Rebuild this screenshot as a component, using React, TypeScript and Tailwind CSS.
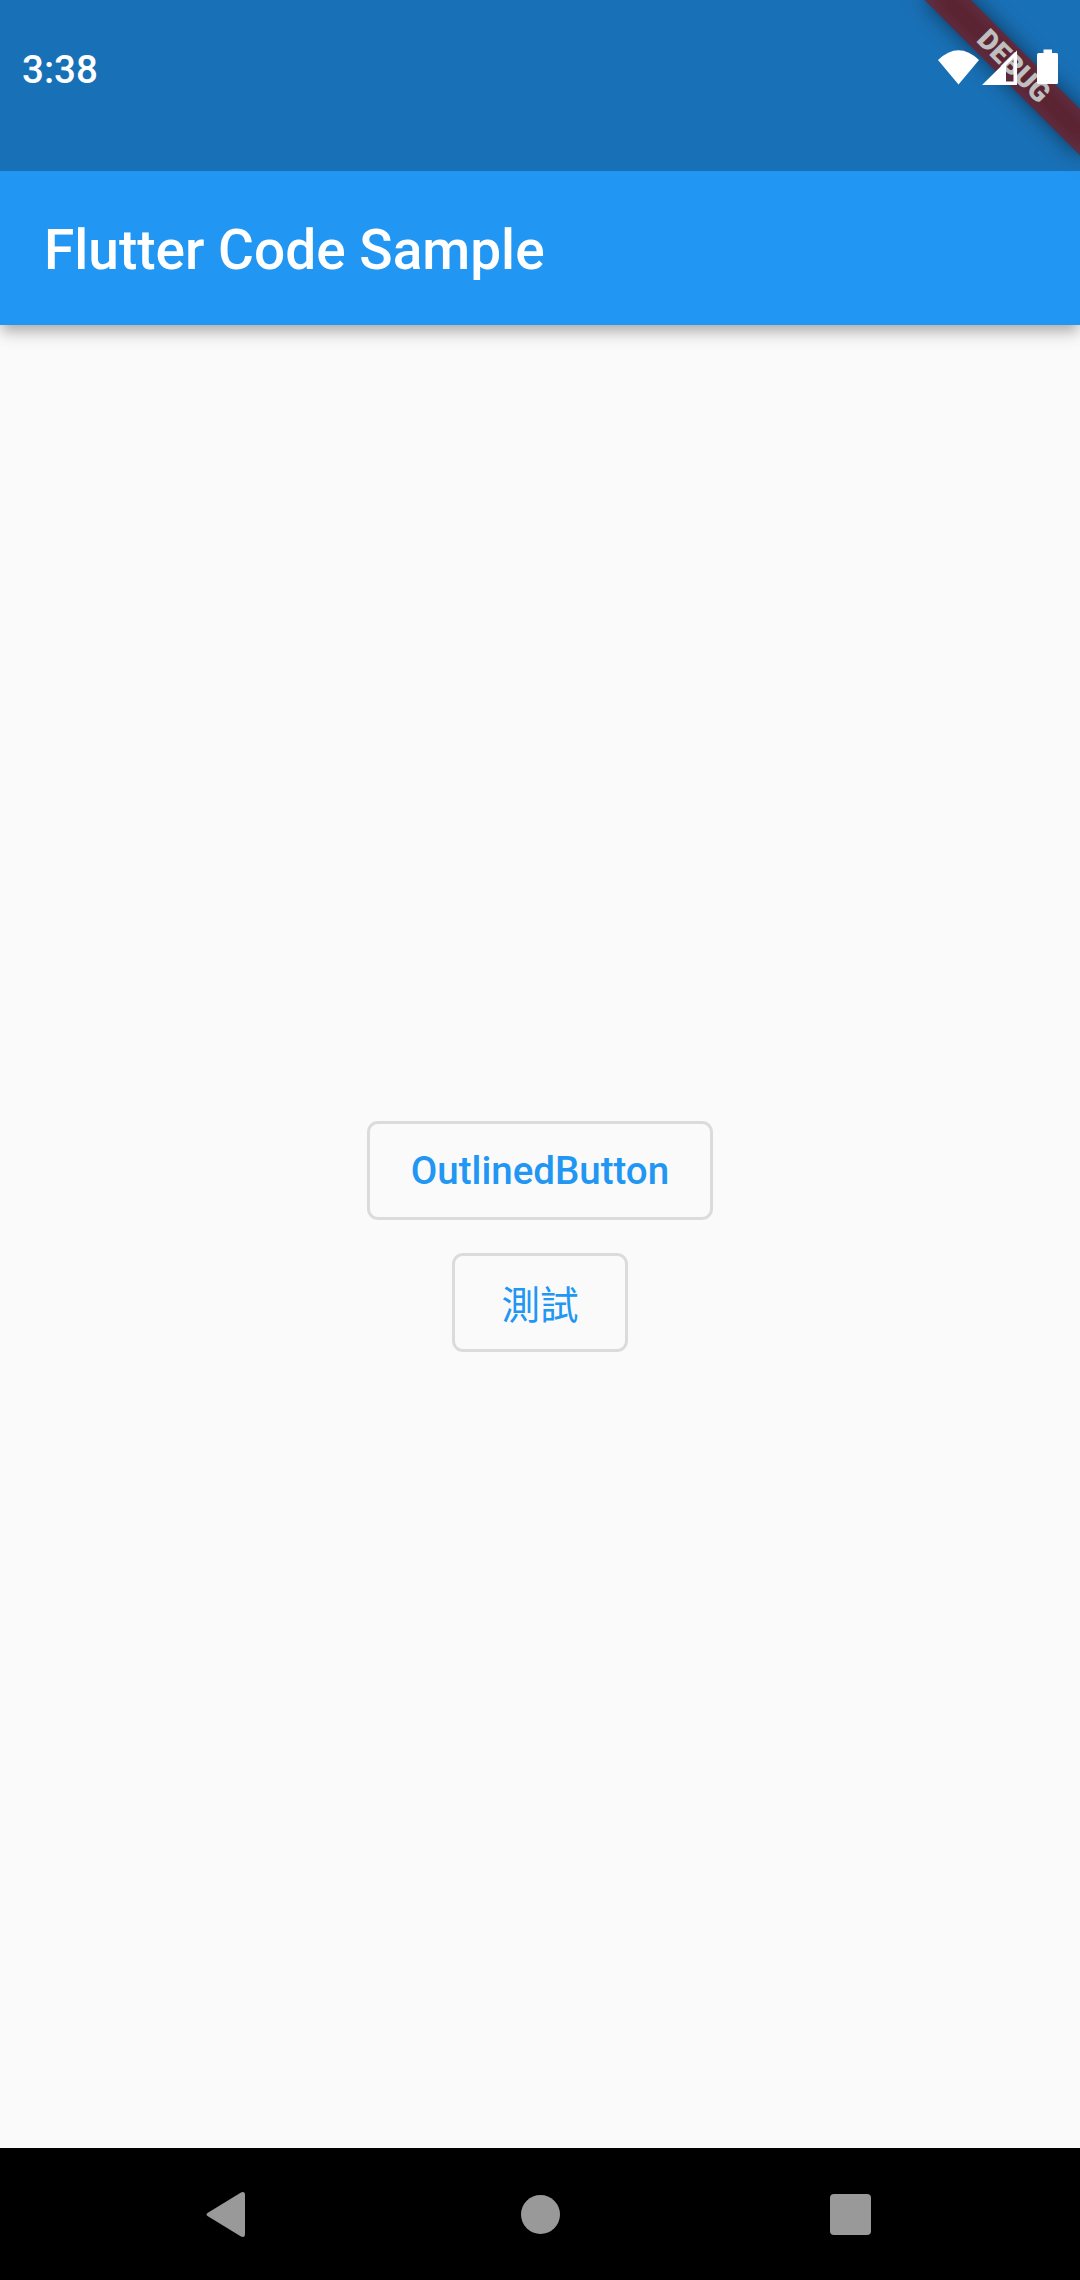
function StatusIcons() {
  return (
    <svg className="h-[36px] w-[122px]" viewBox="938 49 122 36" fill="#fff" aria-label="Wi-Fi, mobile signal, battery">
      <path d="M938 60Q958.5 40.5 979 60L958.5 84.5Z" />
      <path fillRule="evenodd" d="M982 85L1017 50.5V85ZM1006 65.5V81.500H1013.5V58Z" />
      <path d="M1043.5 49.5H1052V53H1056.500Q1058 53 1058 54.500V82.500Q1058 84 1056.500 84H1039Q1037 84 1037 82.500V54.500Q1037 53 1039 53H1043.500Z" />
    </svg>
  );
}

function DebugBanner() {
  return (
    <div className="pointer-events-none absolute inset-0 overflow-hidden">
      <div className="absolute left-full top-0 h-0 w-0 origin-top-left rotate-45">
        <div className="absolute left-[-110px] top-[77px] h-[33px] w-[220px] bg-black/50 blur-[10.9px]" />
        <div className="absolute left-[-110px] top-[77px] flex h-[33px] w-[220px] items-center justify-center bg-[#b71c1c]/63 pt-[2px] text-[28.05px] leading-none font-black text-white">
          DEBUG
        </div>
      </div>
    </div>
  );
}

function OutlinedButton({ label, cjk = false }: { label: string; cjk?: boolean }) {
  return (
    <button className="flex h-[99px] min-w-[176px] items-center justify-center rounded-[11px] border-3 border-black/12 px-[41px] text-[38.5px] leading-none font-medium text-[#2196f3]">
      <span className={cjk ? "pt-[8px] font-normal" : "pt-[2px]"}>{label}</span>
    </button>
  );
}

export default function App() {
  return (
    <div className="relative flex h-[2280px] w-[1080px] flex-col overflow-hidden bg-[#fafafa] font-['Roboto','Noto_Sans_CJK_TC',sans-serif]">
      <header className="relative shrink-0 bg-[#2196f3] shadow-[0_5.5px_11px_-2.75px_rgba(0,0,0,0.2),0_11px_13.75px_rgba(0,0,0,0.12),0_2.75px_20px_rgba(0,0,0,0.06)]">
        <div className="h-[171px]" />
        <div className="flex h-[154px] items-center px-[44px] pt-[4px]">
          <h1 className="text-[55px] leading-none font-medium text-white">Flutter Code Sample</h1>
        </div>
      </header>
      <main className="flex flex-1 flex-col items-center justify-center gap-[33px]">
        <OutlinedButton label="OutlinedButton" />
        <OutlinedButton label="測試" cjk />
      </main>
      <nav className="flex h-[132px] shrink-0 items-center justify-between bg-black pr-[209px] pl-[206px]">
        <svg className="h-[46px] w-[40px]" viewBox="206 2191 40 46" fill="#999">
          <path d="M207.500 2213L241 2192.500Q245 2191 245 2195V2234Q245 2238 241 2236.500L207.500 2216Q205.500 2214.500 207.500 2213Z" />
        </svg>
        <div className="ml-[4px] size-[39px] rounded-full bg-[#999]" />
        <div className="size-[41px] rounded-[4px] bg-[#999]" />
      </nav>
      <DebugBanner />
      <div className="absolute inset-x-0 top-0 flex h-[171px] items-start justify-between bg-black/25 pr-[20px] pl-[22px] text-white">
        <span className="mt-[50px] text-[38.5px] leading-[40px] font-medium">3:38</span>
        <div className="mt-[49px]"><StatusIcons /></div>
      </div>
    </div>
  );
}
